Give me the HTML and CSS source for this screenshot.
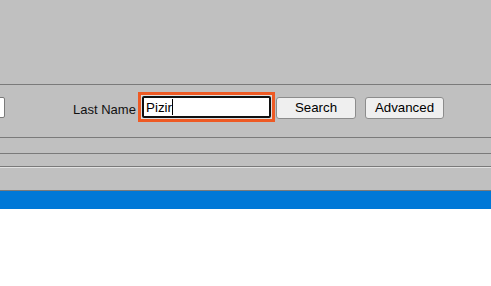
FILE: index.html
```html
<!DOCTYPE html>
<html>
<head>
<meta charset="utf-8">
<link rel="stylesheet" href="styles.css">
</head>
<body>
<div class="app">
  <div class="top"></div>
  <div class="rule"></div>
  <div class="toolbar">
    <div class="cut-input"></div>
    <label class="label">Last Name</label>
    <div class="highlight">
      <div class="field"><span class="value">Pizir</span><span class="caret"></span></div>
    </div>
    <button class="btn btn-search">Search</button>
    <button class="btn btn-adv">Advanced</button>
  </div>
  <div class="rule"></div>
  <div class="row row-a"></div>
  <div class="rule"></div>
  <div class="row row-b"></div>
  <div class="rule"></div>
  <div class="rule-light"></div>
  <div class="row row-c"></div>
  <div class="rule"></div>
  <div class="statusbar"></div>
  <div class="content"></div>
</div>
</body>
</html>
```
FILE: styles.css
```css
html, body {
  margin: 0;
  padding: 0;
  background: #ffffff;
}
.app {
  width: 491px;
  overflow: hidden;
  font-family: "Liberation Sans", Arial, sans-serif;
  font-size: 13px;
  color: #000;
}
.top {
  height: 84px;
  background: #c0c0c0;
}
.rule {
  height: 1px;
  background: #7a7a7a;
}
.rule-light {
  height: 1px;
  background: #e2e2e2;
}
.toolbar {
  height: 30px;
  padding: 7px 0 15px 0;
  background: #c0c0c0;
  display: flex;
  align-items: flex-start;
}
.cut-input {
  margin-left: -100px;
  margin-top: 5px;
  width: 103px;
  height: 19px;
  background: #fff;
  border: 1px solid #7a7a7a;
  border-radius: 2px;
  flex: none;
}
.label {
  margin-left: 68px;
  margin-top: 10px;
  width: 65px;
  line-height: 15px;
  font-size: 13px;
  flex: none;
  color: #111;
  white-space: nowrap;
}
.highlight {
  flex: none;
  width: 131px;
  height: 24px;
  border: 3px solid #ee5a24;
  padding: 0;
  background: #dedede;
  display: flex;
}
.field {
  margin: 1px;
  flex: 1;
  background: #fff;
  border: 2px solid #101010;
  border-radius: 2px;
  display: flex;
  align-items: center;
  padding-left: 2px;
}
.value {
  line-height: 15px;
  font-size: 13.4px;
}
.caret {
  width: 1px;
  height: 16px;
  background: #000;
}
.btn {
  flex: none;
  margin-top: 5px;
  height: 22px;
  padding: 0;
  background: #efefef;
  border: 1px solid #8c8c8c;
  border-radius: 3px;
  font-family: "Liberation Sans", Arial, sans-serif;
  font-size: 13.3px;
  color: #000;
  line-height: 18px;
}
.btn-search {
  margin-left: 1px;
  width: 80px;
}
.btn-adv {
  margin-left: 9px;
  width: 79px;
}
.row {
  background: #c0c0c0;
}
.row-a { height: 15px; }
.row-b { height: 12px; }
.row-c { height: 22px; }
.statusbar {
  height: 18px;
  background: #0078d7;
}
.content {
  height: 77px;
  background: #fff;
}
```
